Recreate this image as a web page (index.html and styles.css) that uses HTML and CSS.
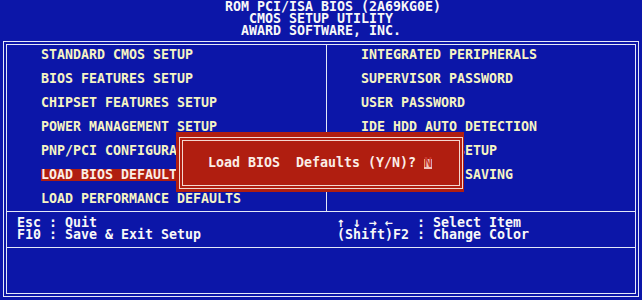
FILE: index.html
```html
<!DOCTYPE html>
<html lang="en">
<head>
  <meta charset="UTF-8" />
  <title>CMOS Setup Utility</title>
  <link rel="stylesheet" href="styles.css">
</head>
<body>
  <header class="title">
    <div class="title-line rom">ROM PCI/ISA BIOS (2A69KG0E)</div>
    <div class="title-line utility">CMOS SETUP UTILITY</div>
    <div class="title-line vendor">AWARD SOFTWARE, INC.</div>
  </header>

  <div class="frame">
    <div class="frame-inner">
      <div class="menu">
        <ul class="menu-col left">
          <li>STANDARD CMOS SETUP</li>
          <li>BIOS FEATURES SETUP</li>
          <li>CHIPSET FEATURES SETUP</li>
          <li>POWER MANAGEMENT SETUP</li>
          <li>PNP/PCI CONFIGURATION</li>
          <li class="active">LOAD BIOS DEFAULTS</li>
          <li>LOAD PERFORMANCE DEFAULTS</li>
        </ul>
        <ul class="menu-col right">
          <li>INTEGRATED PERIPHERALS</li>
          <li>SUPERVISOR PASSWORD</li>
          <li>USER PASSWORD</li>
          <li>IDE HDD AUTO DETECTION</li>
          <li>SAVE &amp; EXIT SETUP</li>
          <li>EXIT WITHOUT SAVING</li>
          <li></li>
        </ul>
      </div>

      <div class="keys">
        <div class="keys-col">Esc : Quit
F10 : Save &amp; Exit Setup</div>
        <div class="keys-col">↑ ↓ → ←   : Select Item
(Shift)F2 : Change Color</div>
      </div>

      <div class="status"></div>
    </div>
  </div>

  <div class="dialog">
    <div class="dialog-frame">
      <div class="dialog-inner">Load BIOS  Defaults (Y/N)? <span class="cursor">N</span></div>
    </div>
  </div>
</body>
</html>
```

FILE: styles.css
```css
* {
  box-sizing: border-box;
}

body {
  margin: 0;
  width: 642px;
  height: 300px;
  overflow: hidden;
  position: relative;
  background: #0c16a8;
  color: #f8f8f8;
  font-family: "DejaVu Sans Mono", "Liberation Mono", monospace;
  font-weight: bold;
  font-size: 13.29px;
  line-height: 12px;
}

/* title block: three text rows */
.title {
  height: 36px;
  padding-top: 1px;
}

.title-line {
  height: 12px;
  white-space: pre;
}

.title-line.rom { padding-left: 225px; }
.title-line.utility { padding-left: 249px; }
.title-line.vendor { padding-left: 241px; }

/* double line frame */
.frame {
  width: 636px;
  height: 256px;
  margin: 5px 0 0 3px;
  border: 1px solid #e4e8f8;
  padding: 2px;
}

.frame-inner {
  height: 100%;
  border: 1px solid #e4e8f8;
  display: flex;
  flex-direction: column;
}

.menu {
  display: grid;
  grid-template-columns: 320px 1fr;
  border-bottom: 1px solid #e4e8f8;
}

.menu-col {
  list-style: none;
  margin: 0;
  padding: 4px 0 6px 34px;
  display: flex;
  flex-direction: column;
  gap: 12px;
  color: #f6f4c4;
}

.menu-col li {
  height: 12px;
  white-space: pre;
}

.menu-col.left {
  border-right: 1px solid #e4e8f8;
}

.menu-col li.active {
  width: fit-content;
  background: #b01e10;
  color: #fbeee8;
}

.keys {
  display: grid;
  grid-template-columns: 320px 1fr;
  padding: 5px 0 6px;
  border-bottom: 1px solid #e4e8f8;
}

.keys-col {
  padding-left: 10px;
  white-space: pre;
}

.status {
  flex: 1;
}

/* confirm dialog sits over the menu */
.dialog {
  position: absolute;
  left: 176px;
  top: 132px;
  width: 288px;
  height: 60px;
  padding: 5px 1px 3px 3px;
  background: #b01e10;
}

.dialog-frame {
  height: 100%;
  border: 1px solid #f4d8d0;
  padding: 2px;
}

.dialog-inner {
  height: 100%;
  border: 1px solid #f4d8d0;
  padding: 16px 0 0 25px;
  white-space: pre;
  color: #fbeee8;
}

.cursor {
  display: inline-block;
  height: 12px;
  background: linear-gradient(transparent 2px, #f0c4bc 2px);
  color: #c8382c;
}
```
